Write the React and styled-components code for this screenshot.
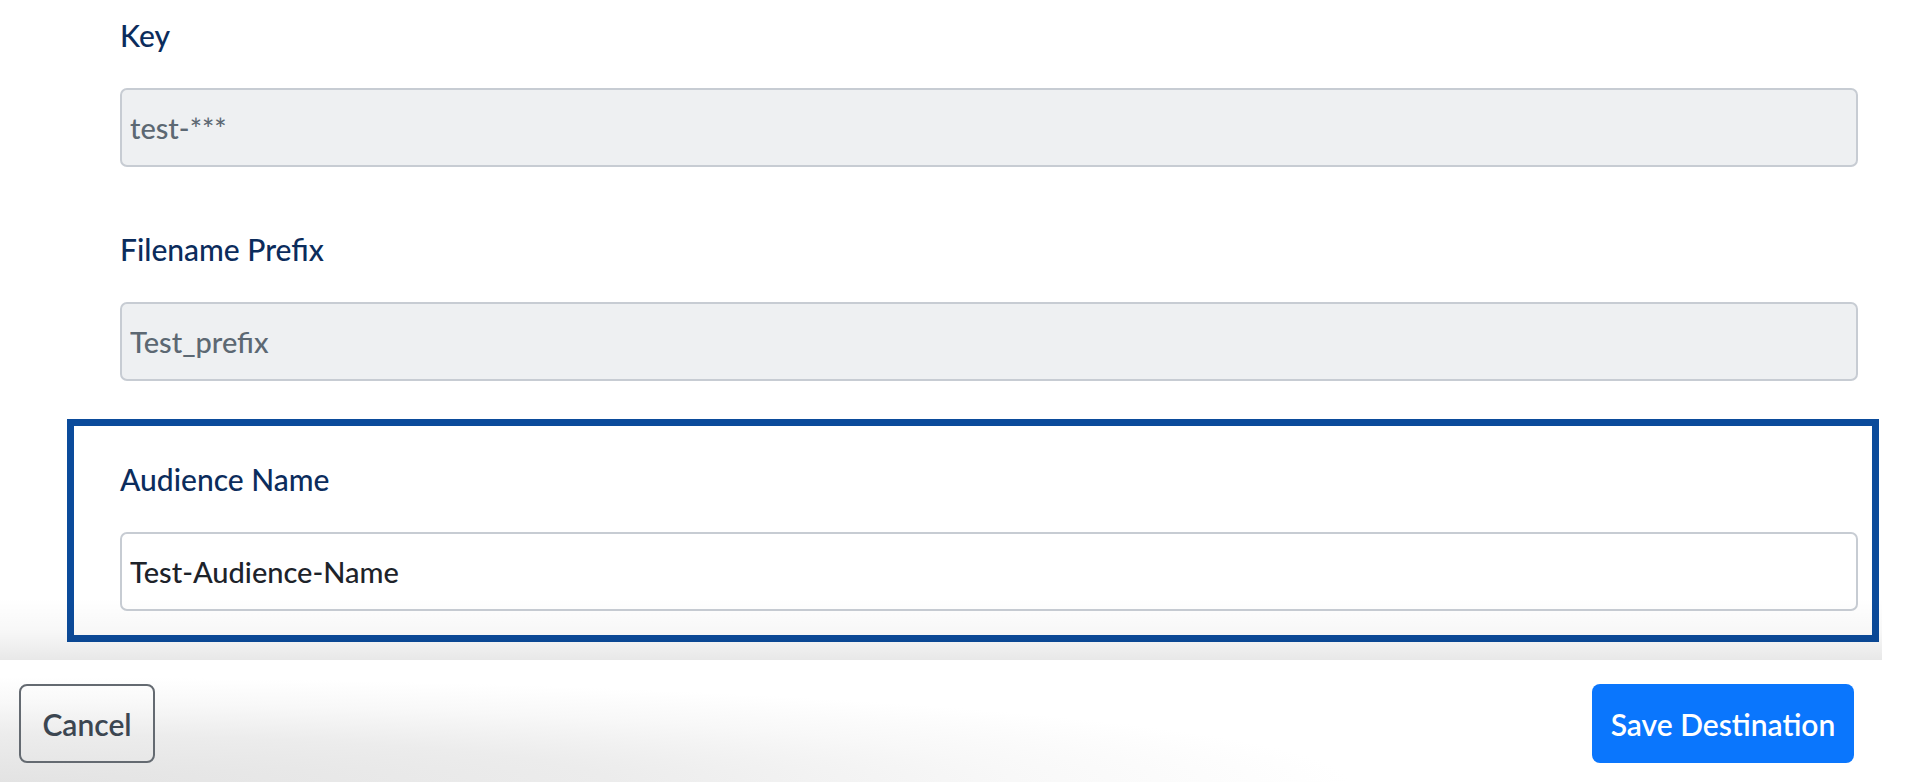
import React from "react";
import styled, { createGlobalStyle } from "styled-components";

const GlobalStyle = createGlobalStyle`
  html, body {
    margin: 0;
    padding: 0;
    background: #ffffff;
  }
  body {
    font-family: Lato, "Noto Sans", sans-serif;
    overflow: hidden;
  }
  * { box-sizing: border-box; }
`;

const Page = styled.div`
  width: 1908px;
  height: 782px;
  display: flex;
  flex-direction: column;
  background: #ffffff;
`;

const ScrollArea = styled.div`
  position: relative;
  flex: 1;
  padding-top: 13px;
  margin-right: 26px;
  &::after {
    content: "";
    position: absolute;
    left: 0;
    right: 0;
    bottom: 0;
    height: 62px;
    background: linear-gradient(
      to bottom,
      rgba(0, 0, 0, 0) 0%,
      rgba(0, 0, 0, 0.03) 55%,
      rgba(0, 0, 0, 0.09) 100%
    );
    pointer-events: none;
  }
`;

const Field = styled.div`
  display: flex;
  flex-direction: column;
  gap: 30px;
  margin: ${(p) => (p.$highlight ? "38px 3px 0 67px" : p.$first ? "0" : "60px 0 0 0")};
  padding: ${(p) => (p.$highlight ? "31px 14px 24px 46px" : "0 24px 0 120px")};
  border: ${(p) => (p.$highlight ? "7px solid #0b4b9b" : "none")};
`;

const Label = styled.label`
  font-size: 30px;
  line-height: 45px;
  font-weight: 500;
  color: #0b2c5c;
`;

const Input = styled.input`
  height: 79px;
  width: 100%;
  padding: 0 8px;
  font-family: Lato, "Noto Sans", sans-serif;
  font-size: 29px;
  font-weight: 500;
  color: ${(p) => (p.disabled ? "#5c6873" : "#1d232a")};
  background: ${(p) => (p.disabled ? "#eef0f2" : "#ffffff")};
  border: 2px solid #c7ccd3;
  border-radius: 7px;
  outline: none;
  -webkit-text-fill-color: ${(p) => (p.disabled ? "#5c6873" : "#1d232a")};
  opacity: 1;
`;

const Footer = styled.div`
  height: 122px;
  flex: none;
  display: flex;
  align-items: flex-start;
  justify-content: space-between;
  padding: 24px 54px 0 19px;
  background: radial-gradient(
    ellipse 1350px 105px at 0 100%,
    #e3e3e3 0%,
    #ececec 45%,
    #f8f8f8 75%,
    #ffffff 100%
  );
`;

const Button = styled.button`
  height: 79px;
  width: ${(p) => (p.$primary ? "262px" : "136px")};
  padding: 0;
  font-family: Lato, "Noto Sans", sans-serif;
  font-size: 30px;
  font-weight: 600;
  border-radius: 8px;
  cursor: pointer;
  color: ${(p) => (p.$primary ? "#ffffff" : "#3c4651")};
  background: ${(p) => (p.$primary ? "#0a76fd" : "transparent")};
  border: ${(p) => (p.$primary ? "none" : "2px solid #646a71")};
`;

export default function App() {
  return (
    <>
      <GlobalStyle />
      <Page>
        <ScrollArea>
          <Field $first>
            <Label>Key</Label>
            <Input disabled value="test-***" readOnly />
          </Field>
          <Field>
            <Label>Filename Prefix</Label>
            <Input disabled value="Test_prefix" readOnly />
          </Field>
          <Field $highlight>
            <Label>Audience Name</Label>
            <Input value="Test-Audience-Name" readOnly />
          </Field>
        </ScrollArea>
        <Footer>
          <Button>Cancel</Button>
          <Button $primary>Save Destination</Button>
        </Footer>
      </Page>
    </>
  );
}
